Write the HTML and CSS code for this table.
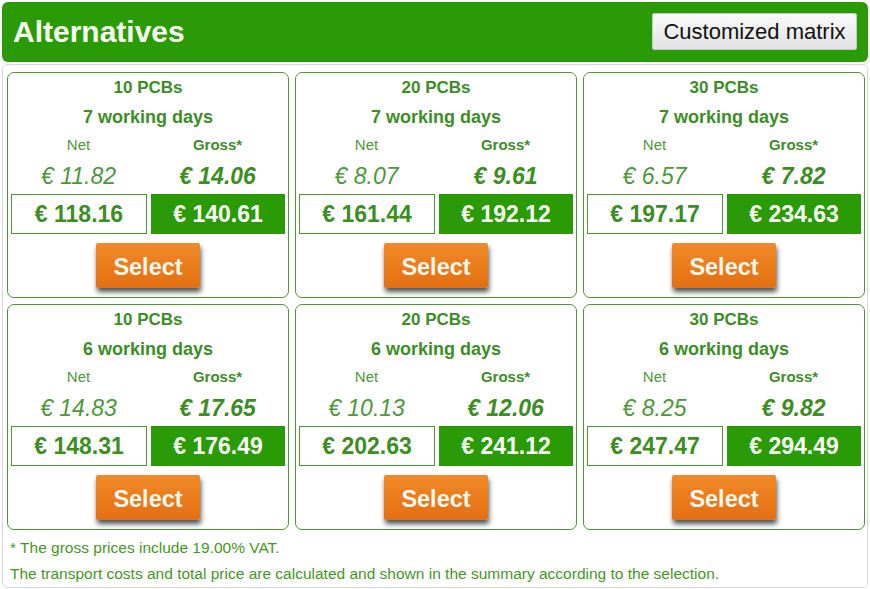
FILE: index.html
```html
<!DOCTYPE html>
<html>
<head>
<meta charset="utf-8">
<link rel="stylesheet" href="styles.css">
</head>
<body>
<div class="page">
  <div class="header">
    <h1 class="title">Alternatives</h1>
    <button class="matrix-btn">Customized matrix</button>
  </div>
  <div class="panel">
    <div class="grid">
      <div class="card">
        <div class="qty">10 PCBs</div>
        <div class="days">7 working days</div>
        <div class="pair labels"><span class="net">Net</span><span class="gross">Gross*</span></div>
        <div class="pair unit"><span class="net">€ 11.82</span><span class="gross">€ 14.06</span></div>
        <div class="pair totals"><span class="box-net">€ 118.16</span><span class="box-gross">€ 140.61</span></div>
        <button class="select">Select</button>
      </div>
      <div class="card">
        <div class="qty">20 PCBs</div>
        <div class="days">7 working days</div>
        <div class="pair labels"><span class="net">Net</span><span class="gross">Gross*</span></div>
        <div class="pair unit"><span class="net">€ 8.07</span><span class="gross">€ 9.61</span></div>
        <div class="pair totals"><span class="box-net">€ 161.44</span><span class="box-gross">€ 192.12</span></div>
        <button class="select">Select</button>
      </div>
      <div class="card">
        <div class="qty">30 PCBs</div>
        <div class="days">7 working days</div>
        <div class="pair labels"><span class="net">Net</span><span class="gross">Gross*</span></div>
        <div class="pair unit"><span class="net">€ 6.57</span><span class="gross">€ 7.82</span></div>
        <div class="pair totals"><span class="box-net">€ 197.17</span><span class="box-gross">€ 234.63</span></div>
        <button class="select">Select</button>
      </div>
      <div class="card">
        <div class="qty">10 PCBs</div>
        <div class="days">6 working days</div>
        <div class="pair labels"><span class="net">Net</span><span class="gross">Gross*</span></div>
        <div class="pair unit"><span class="net">€ 14.83</span><span class="gross">€ 17.65</span></div>
        <div class="pair totals"><span class="box-net">€ 148.31</span><span class="box-gross">€ 176.49</span></div>
        <button class="select">Select</button>
      </div>
      <div class="card">
        <div class="qty">20 PCBs</div>
        <div class="days">6 working days</div>
        <div class="pair labels"><span class="net">Net</span><span class="gross">Gross*</span></div>
        <div class="pair unit"><span class="net">€ 10.13</span><span class="gross">€ 12.06</span></div>
        <div class="pair totals"><span class="box-net">€ 202.63</span><span class="box-gross">€ 241.12</span></div>
        <button class="select">Select</button>
      </div>
      <div class="card">
        <div class="qty">30 PCBs</div>
        <div class="days">6 working days</div>
        <div class="pair labels"><span class="net">Net</span><span class="gross">Gross*</span></div>
        <div class="pair unit"><span class="net">€ 8.25</span><span class="gross">€ 9.82</span></div>
        <div class="pair totals"><span class="box-net">€ 247.47</span><span class="box-gross">€ 294.49</span></div>
        <button class="select">Select</button>
      </div>
    </div>
    <div class="notes">
      <p>* The gross prices include 19.00% VAT.</p>
      <p>The transport costs and total price are calculated and shown in the summary according to the selection.</p>
    </div>
  </div>
</div>
</body>
</html>
```

FILE: styles.css
```css
* { box-sizing: border-box; }
html, body { margin: 0; padding: 0; background: #fff; }
body { font-family: "Liberation Sans", Arial, sans-serif; color: #3a8f1f; }

.page { padding: 2px; width: 870px; }

.header {
  height: 60px;
  background: #2a9b06;
  border-radius: 6px;
  display: flex;
  align-items: center;
  justify-content: space-between;
  padding: 0 11px 0 11px;
  margin-bottom: 2px;
}
.title {
  margin: 0;
  color: #f6fff0;
  font-size: 30px;
  font-weight: bold;
  line-height: 1;
}
.matrix-btn {
  height: 37px;
  width: 205px;
  margin-top: -1px;
  border: 1px solid #c8c8c8;
  border-radius: 2px;
  background: linear-gradient(#fafafa, #e2e2e2);
  font-family: "Liberation Sans", Arial, sans-serif;
  font-size: 22px;
  color: #111;
  padding: 0;
}

.panel {
  border: 1px solid #d8d8d8;
  border-radius: 5px;
  padding: 7px 4px 0 4px;
  height: 524px;
}
.grid {
  display: grid;
  grid-template-columns: repeat(3, 282px);
  grid-template-rows: repeat(2, 226px);
  gap: 6px;
}
.card {
  border: 1px solid #4a9a30;
  border-radius: 7px;
  padding: 3px 3px 0 3px;
  display: flex;
  flex-direction: column;
  align-items: stretch;
  text-align: center;
}
.qty { font-size: 17px; font-weight: bold; line-height: 24px; color: #3a8f1f; }
.days { font-size: 18px; font-weight: bold; line-height: 34px; color: #3a8f1f; }
.pair { display: flex; gap: 4px; }
.pair > span { flex: 1 1 0; }
.labels { font-size: 15px; line-height: 22px; }
.labels .net { color: #4a9a38; }
.labels .gross { font-weight: bold; color: #3a8f1f; }
.unit { font-size: 23px; line-height: 36px; padding-top: 2px; font-style: italic; }
.unit .net { color: #4a9a38; }
.unit .gross { font-weight: bold; color: #3a8f1f; }
.totals { height: 40px; font-size: 23px; font-weight: bold; }
.box-net {
  border: 1px solid #4a9a30;
  color: #3a8f1f;
  line-height: 38px;
}
.box-gross {
  background: #2a9b06;
  color: #f8fff4;
  line-height: 40px;
}
.select {
  align-self: center;
  margin-top: 9px;
  width: 104px;
  height: 45px;
  border: none;
  border-radius: 2px;
  background: linear-gradient(#f18a28, #e36f12);
  color: #fff8ee;
  font-family: "Liberation Sans", Arial, sans-serif;
  font-weight: bold;
  font-size: 23.5px;
  box-shadow: 1px 4px 5px rgba(20, 30, 30, 0.75);
  padding: 3px 0 0 0;
}

.notes { margin-top: 5px; padding-left: 3px; }
.notes p {
  margin: 0;
  font-size: 15.5px;
  line-height: 26px;
  color: #3f9a20;
}
```
